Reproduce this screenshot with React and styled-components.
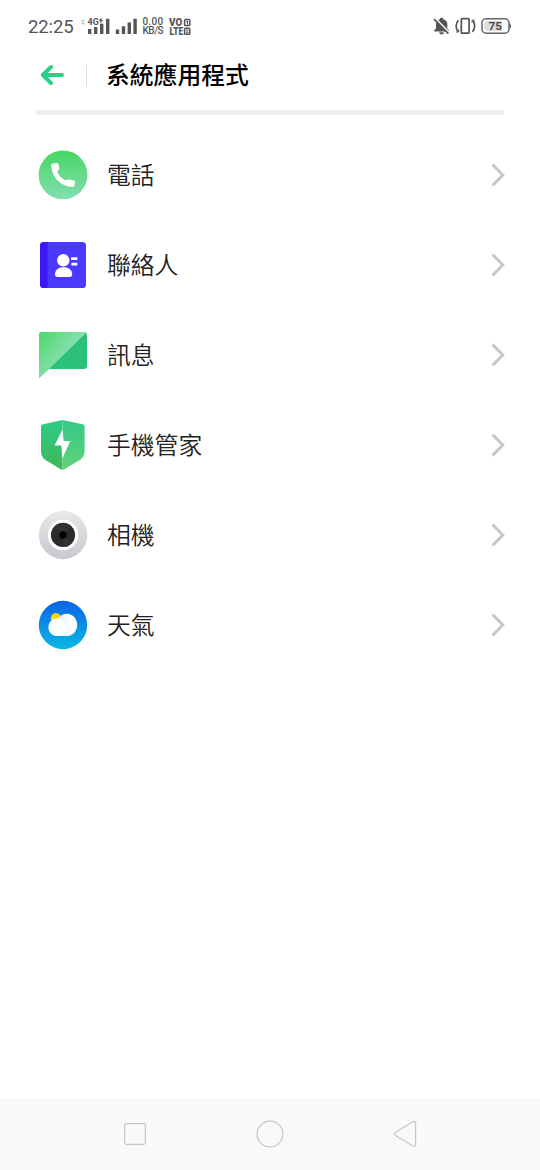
import React from 'react'
import styled, { createGlobalStyle } from 'styled-components';

const GlobalStyle = createGlobalStyle`
  * {
    box-sizing: border-box;
  }

  body {
    margin: 0;
    background: #fff;
    font-family: Roboto, 'Noto Sans CJK TC', sans-serif;
  }

  svg {
    display: block;
    flex-shrink: 0;
  }
`

const Screen = styled.div`
  display: flex;
  flex-direction: column;
  width: 540px;
  height: 1170px;
  overflow: hidden;
  background: #fff;
`

const StatusBar = styled.div`
  display: flex;
  align-items: center;
  height: 52px;
  padding: 0 29px 0 28px;
  color: #555;
`

const Clock = styled.span`
  width: 52px;
  font-size: 18.5px;
  line-height: 20px;
  letter-spacing: -0.1px;
  padding-top: 2px;
`

const NetSpeed = styled.div`
  display: flex;
  flex-direction: column;
  width: 27px;
  margin-left: 5px;
  padding-left: 0.5px;
  font-size: 10px;
  font-weight: 500;
  line-height: 9px;
  white-space: nowrap;
`

const Speed = styled.span`
  letter-spacing: ${props => props.$spacing};
`

const StatusRight = styled.div`
  display: flex;
  align-items: center;
  gap: 5px;
  margin-left: auto;
`

const Header = styled.header`
  display: flex;
  align-items: center;
  height: 46px;
  padding-left: 40px;
`

const Separator = styled.div`
  width: 1px;
  height: 21px;
  margin: 0 19px 0 21px;
  background: #ddd;
`

const Title = styled.h1`
  margin: 0;
  padding-top: 2px;
  font-size: 23.8px;
  font-weight: 500;
  line-height: 36px;
  color: #000;
`

const Rule = styled.div`
  height: 5px;
  margin: 12px 36px 0;
  background: #eee;
`

const List = styled.ul`
  flex: 1;
  margin: 0;
  padding: 15px 35px 0 38px;
  list-style: none;
`

const Row = styled.li`
  display: flex;
  align-items: center;
  height: 90px;
`

const Label = styled.span`
  flex: 1;
  margin-left: 19px;
  padding-top: 2px;
  font-size: 23.8px;
  font-weight: 350;
  line-height: 36px;
  color: #222;
`

const NavBar = styled.nav`
  display: grid;
  grid-template-columns: repeat(3, 135px);
  justify-content: center;
  justify-items: center;
  align-items: center;
  height: 72px;
  background: #f9f9f9;
`

const BackArrow = () => (
  <svg width='25' height='22' viewBox='0 0 25 22' fill='none' stroke='#29d184' strokeWidth='4' strokeLinecap='round' strokeLinejoin='round'>
    <path d='M2.8 11H22M11 3L2.8 11L11 19' />
  </svg>
)

const Chevron = () => (
  <svg width='14' height='24' viewBox='0 0 14 24' fill='none' stroke='#c8c8c8' strokeWidth='3'>
    <path d='M1.6 1.6L11.8 12L1.6 22.4' />
  </svg>
)

const Signals = () => (
  <svg width='57' height='20' viewBox='80 16 57 20' fill='#555'>
    <path d='M81 21.6L83 19.3L85 21.6ZM81 22.8H85L83 25Z' fill='#bbb' />
    <path d='M88 29h3.4v5H88zM94 27h3.4v7H94zM100 23.8h3.4V34H100zM106 18.8h3.4V34H106z' />
    <path d='M115.8 29.4h3.4V34h-3.4zM121.8 26.3h3.4V34h-3.4zM127.6 22.6h3.4V34h-3.4zM133.4 18.8h3.4V34h-3.4z' />
    <text x='87.6' y='25' fontSize='9' fontWeight='700' fontFamily='Roboto, sans-serif'>4G</text>
    <path d='M100.9 18.2v4.6M99.2 20.4h3.6' stroke='#555' strokeWidth='1.3' />
  </svg>
)

const VoLte = () => (
  <svg width='22' height='20' viewBox='169 16 22 20' fill='#555' fontFamily='Roboto, sans-serif' fontWeight='900'>
    <text x='169' y='26' fontSize='10' textLength='13.2' lengthAdjust='spacingAndGlyphs'>VO</text>
    <text x='169.4' y='34.7' fontSize='10' textLength='13.8' lengthAdjust='spacingAndGlyphs'>LTE</text>
    <rect x='184.6' y='19.6' width='5.2' height='6' rx='0.8' fill='none' stroke='#555' strokeWidth='1.5' />
    <path d='M186.3 21.4h1.2v3' fill='none' stroke='#555' strokeWidth='1.1' />
    <rect x='184.6' y='28.2' width='5.2' height='6' rx='0.8' fill='none' stroke='#555' strokeWidth='1.5' />
    <path d='M186 30h2.2L186.3 32.5h2.2' fill='none' stroke='#555' strokeWidth='0.9' />
  </svg>
)

const Muted = () => (
  <svg width='16' height='18' viewBox='433 17 16 18'>
    <path d='M434.3 31.4V30L436 28.4V23.8C436 21.2 437.8 19.6 440 19.2V18.6C440 17.5 443.2 17.5 443.2 18.6V19.2C445.8 19.8 447.3 21.5 447.3 24V28.4L448.9 30V31.4ZM439.3 32.3H443.9C443.9 35.2 439.3 35.2 439.3 32.3Z' fill='#555' />
    <path d='M435 18.2L449 32.2' stroke='#fff' strokeWidth='1.8' />
    <path d='M434 19.2L448.4 33.6' stroke='#555' strokeWidth='1.7' />
  </svg>
)

const Vibrate = () => (
  <svg width='22' height='18' viewBox='454.5 17 22 18' fill='none' stroke='#555' strokeWidth='1.7'>
    <rect x='461.8' y='18.7' width='7.8' height='14.5' rx='1' />
    <path d='M459 20.3C456 23 455.9 28.6 458.5 31.6M472.8 31.8C475.8 29 475.9 23.5 473.3 20.5' />
    <path d='M456.6 32h2.6v-2.6M475.2 20.2h-2.6v2.6' strokeWidth='1' />
  </svg>
)

const Battery = () => (
  <svg width='30' height='18' viewBox='481 17 30 18'>
    <path d='M509.3 23.2C511.5 23.6 511.5 28.3 509.3 28.7Z' fill='#555' />
    <rect x='482' y='18.8' width='27' height='14.4' rx='4.2' fill='#fff' stroke='#666' strokeWidth='1.5' />
    <path d='M487 21H502V31H487C485.3 31 484.3 30 484.3 28.5V23.5C484.3 22 485.3 21 487 21Z' fill='#ddd' />
    <text x='495.3' y='30.3' fontSize='11.8' fontWeight='600' fontFamily='Roboto, sans-serif' textAnchor='middle' fill='#444'>75</text>
  </svg>
)

const AppIcon = ({ children }) => (
  <svg width='50' height='50' viewBox='0 0 50 50'>{children}</svg>
)

const PhoneIcon = () => (
  <AppIcon>
    <linearGradient id='phone' x1='0' y1='0' x2='0' y2='1'>
      <stop offset='0' stopColor='#47d663' />
      <stop offset='1' stopColor='#82dfb1' />
    </linearGradient>
    <circle cx='25' cy='24.9' r='24.4' fill='url(#phone)' />
    <path d='M14 13.7L18.8 12.9C19.7 12.8 20.2 13.3 20.4 14L21.4 18.6C21.5 19.5 19.6 20.6 19.5 21.7C20.5 25.3 23.8 28.6 27.7 30.3C28.9 30.4 30 29.4 31.2 29.6L36 30.6C36.8 30.8 37.1 31.2 37 32L36.3 36C36.2 36.7 35.7 37 35 37C22.6 36.5 13.6 27.6 13.2 14.8C13.2 14.2 13.5 13.8 14 13.7Z' fill='#fff' />
  </AppIcon>
)

const ContactsIcon = () => (
  <AppIcon>
    <rect x='2' y='2' width='46' height='46' rx='3.6' fill='#4a3aff' />
    <path d='M9.6 2H5.6C3.6 2 2 3.6 2 5.6V44.4C2 46.4 3.6 48 5.6 48H9.6Z' fill='#3c18fb' />
    <circle cx='25.3' cy='20.3' r='6.2' fill='#fff' />
    <path d='M17 34.5C17 29.8 20.4 27.2 25.5 27.2S34.2 29.8 34.2 34.5C34.2 36.2 33.2 36.9 31.8 36.9H19.4C18 36.9 17 36.2 17 34.5Z' fill='#fff' />
    <path d='M33 17.3h6.3v2.7H33zM33.4 22.8h5.9v2.7h-5.9z' fill='#fff' />
  </AppIcon>
)

const MessagesIcon = () => (
  <AppIcon>
    <linearGradient id='message' x1='0' y1='0.2' x2='0.55' y2='0.65'>
      <stop offset='0' stopColor='#56d975' />
      <stop offset='1' stopColor='#8be0b4' />
    </linearGradient>
    <path d='M4 2H46C48 2 49 3 49 5V36C49 38 48 39 46 39H11L1 48V5C1 3 2 2 4 2Z' fill='#2bc17b' />
    <path d='M4 2H46C47 2 47.7 2.3 48.2 2.8L11 39L1 48V5C1 3 2 2 4 2Z' fill='url(#message)' />
  </AppIcon>
)

const ManagerIcon = () => (
  <AppIcon>
    <linearGradient id='shieldLeft' x1='0' y1='0' x2='0' y2='1'>
      <stop offset='0' stopColor='#2ecb87' />
      <stop offset='1' stopColor='#3fb757' />
    </linearGradient>
    <linearGradient id='shieldRight' x1='0' y1='0' x2='0' y2='1'>
      <stop offset='0' stopColor='#34c98b' />
      <stop offset='1' stopColor='#62d277' />
    </linearGradient>
    <path d='M24.5 0L5 4.2C3.7 4.5 3 5.3 3 6.6V31C3 35 4.2 37.5 7.2 39.8L22.6 49.3L24.5 50Z' fill='url(#shieldLeft)' />
    <path d='M24.5 0L44.5 4.2C45.9 4.5 46.6 5.3 46.6 6.6V31C46.6 35 45.2 37.5 42.2 39.8L26.5 49.3L24.5 50Z' fill='url(#shieldRight)' />
    <path d='M24.5 9.5L16.5 25.6H23.4L24.3 38.6L32.3 21.1H25.6Z' fill='#fff' />
  </AppIcon>
)

const CameraIcon = () => (
  <AppIcon>
    <linearGradient id='camera' x1='0' y1='0' x2='0' y2='1'>
      <stop offset='0' stopColor='#e8e8e8' />
      <stop offset='1' stopColor='#c8c8d2' />
    </linearGradient>
    <circle cx='25' cy='25' r='24.2' fill='url(#camera)' />
    <circle cx='25' cy='25' r='15.2' fill='#fff' />
    <circle cx='25' cy='25' r='12.1' fill='#2b2b2b' />
    <path d='M25 25L16.4 16.4A12.1 12.1 0 0 1 33.6 16.4ZM25 25L33.6 33.6A12.1 12.1 0 0 1 25 37.1Z' fill='#323232' />
    <circle cx='25' cy='25' r='3.7' fill='#000' />
  </AppIcon>
)

const WeatherIcon = () => (
  <AppIcon>
    <linearGradient id='sky' x1='0' y1='0' x2='0' y2='1'>
      <stop offset='0' stopColor='#0a62e8' />
      <stop offset='1' stopColor='#0bb9e2' />
    </linearGradient>
    <linearGradient id='cloud' x1='0' y1='0' x2='1' y2='0'>
      <stop offset='0' stopColor='#e6eefa' />
      <stop offset='0.7' stopColor='#fff' />
    </linearGradient>
    <circle cx='25' cy='25' r='24.2' fill='url(#sky)' />
    <circle cx='18' cy='18.2' r='5.2' fill='#ffd20a' />
    <path d='M19.2 18.2H28V36.1H19.2C14.3 36.1 10.4 32.2 10.4 27.2S14.3 18.2 19.2 18.2Z' fill='#fff' />
    <path d='M20.3 18.3C25 18.8 28 22.6 28 27.2C28 31.5 25.6 34.8 22.3 36.1H28.6C34.5 36.1 39.2 31 39.2 24.9S34.8 13.7 28.9 13.7C25 13.7 22 15.5 20.3 18.3Z' fill='url(#cloud)' />
  </AppIcon>
)

const apps = [
  { id: 1, name: '電話', icon: <PhoneIcon /> },
  { id: 2, name: '聯絡人', icon: <ContactsIcon /> },
  { id: 3, name: '訊息', icon: <MessagesIcon /> },
  { id: 4, name: '手機管家', icon: <ManagerIcon /> },
  { id: 5, name: '相機', icon: <CameraIcon /> },
  { id: 6, name: '天氣', icon: <WeatherIcon /> },
]

const App = () => {
  return (
    <>
      <GlobalStyle />
      <Screen>
        <StatusBar>
          <Clock>22:25</Clock>
          <Signals />
          <NetSpeed>
            <Speed $spacing='0.3px'>0.00</Speed>
            <Speed $spacing='-0.5px'>KB/S</Speed>
          </NetSpeed>
          <VoLte />
          <StatusRight>
            <Muted />
            <Vibrate />
            <Battery />
          </StatusRight>
        </StatusBar>

        <Header>
          <BackArrow />
          <Separator />
          <Title>系統應用程式</Title>
        </Header>
        <Rule />

        <List>
          {apps.map((app) => (
            <Row key={app.id}>
              {app.icon}
              <Label>{app.name}</Label>
              <Chevron />
            </Row>
          ))}
        </List>

        <NavBar>
          <svg width='24' height='24' viewBox='0 0 24 24' fill='none' stroke='#c6c6c6' strokeWidth='1.2'>
            <rect x='1.6' y='1.6' width='20.8' height='20.8' rx='1.8' />
          </svg>
          <svg width='28' height='28' viewBox='0 0 28 28' fill='none' stroke='#c6c6c6' strokeWidth='1.2'>
            <circle cx='14' cy='14' r='12.9' />
          </svg>
          <svg width='24' height='28' viewBox='0 0 24 28' fill='none' stroke='#c6c6c6' strokeWidth='1.2'>
            <path d='M2.2 12.6L19.8 1.8C21.2 1 22.6 1.6 22.6 3.2V24.4C22.6 26 21.2 26.8 19.8 26L2.2 15.2C1 14.4 1 13.4 2.2 12.6Z' />
          </svg>
        </NavBar>
      </Screen>
    </>
  );
}

export default App
